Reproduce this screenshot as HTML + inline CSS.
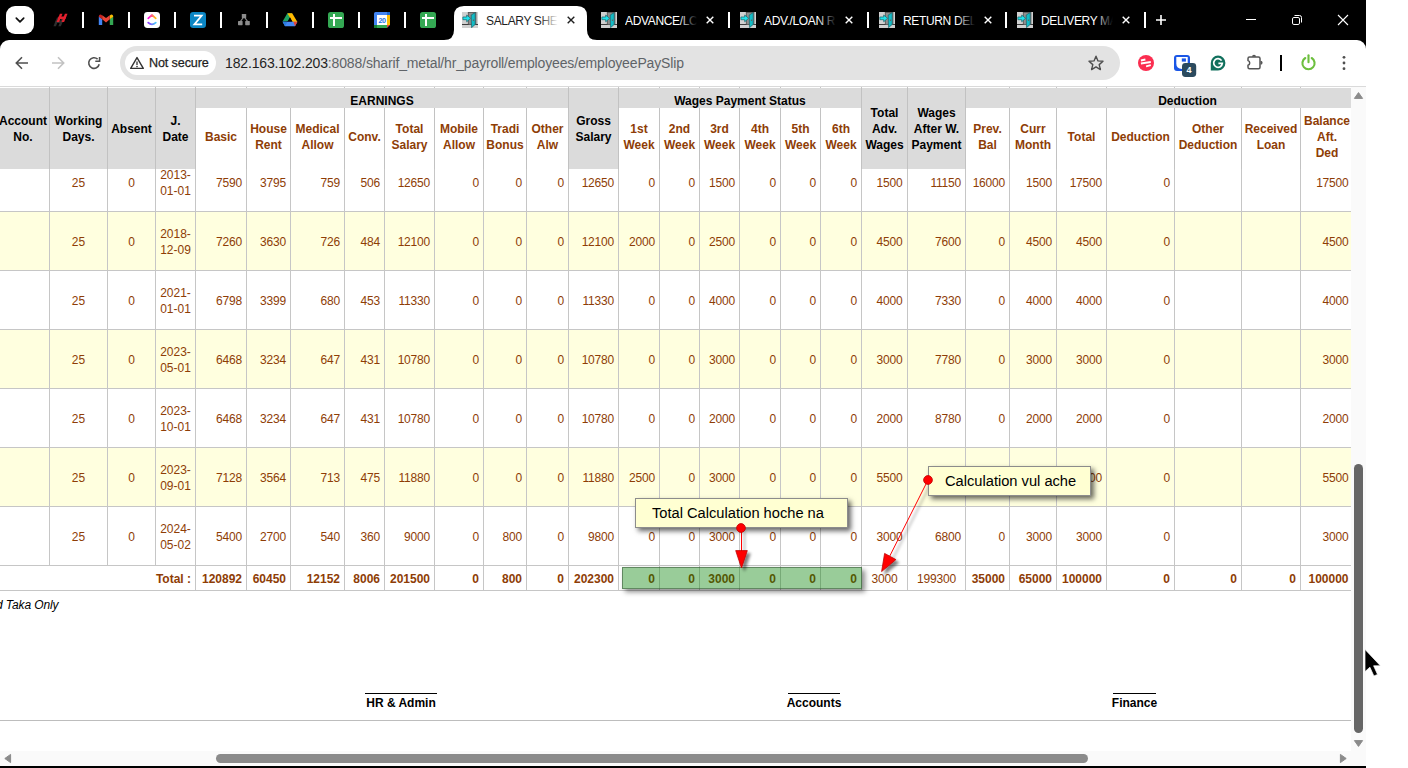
<!DOCTYPE html>
<html lang="en"><head><meta charset="utf-8"><title>SALARY SHEET</title>
<style>
html,body{margin:0;padding:0;}
body{width:1408px;height:768px;position:relative;overflow:hidden;background:#fff;font-family:"Liberation Sans",sans-serif;font-size:12px;}
#win{position:absolute;left:0;top:0;width:1366px;height:768px;overflow:hidden;background:#fff;}
.abs,.abs *{position:absolute;}
#win div,#win span,#win svg{position:absolute;}
.sep{width:2px;height:16px;top:12px;background:#fff;}
.tt{top:13px;height:16px;line-height:16px;font-size:12px;white-space:nowrap;overflow:hidden;letter-spacing:-0.35px;}
.c{color:#8e3d06;font-size:12px;line-height:16px;white-space:nowrap;}
.r{text-align:right;letter-spacing:-0.2px;}
.m{text-align:center;}
.b{font-weight:bold;letter-spacing:0;}
.h{font-weight:bold;text-align:center;line-height:16px;font-size:12px;}
.vl{width:1px;background:#c6c6c6;}
.hl{height:1px;background:#c6c6c6;left:0;width:1351px;}
.note{background:#ffffd2;border:1px solid #8c8c8c;box-shadow:3px 3px 5px rgba(0,0,0,.6);box-sizing:border-box;color:#000;font-size:14.67px;white-space:nowrap;}
</style></head><body>
<div id="win">

<div id="tabstrip" style="left:0;top:0;width:1366px;height:52px;background:#000;"></div>
<div style="left:6px;top:6px;width:28px;height:28px;border-radius:9px;background:#fff;"></div>
<svg style="left:14px;top:14px" width="12" height="12" viewBox="0 0 12 12"><path d="M2.3 4.2 L6 7.9 L9.7 4.2" fill="none" stroke="#111" stroke-width="1.7" stroke-linecap="round" stroke-linejoin="round"/></svg>
<div class="sep" style="left:82px"></div>
<div class="sep" style="left:128px"></div>
<div class="sep" style="left:174px"></div>
<div class="sep" style="left:220px"></div>
<div class="sep" style="left:266px"></div>
<div class="sep" style="left:312px"></div>
<div class="sep" style="left:358px"></div>
<div class="sep" style="left:404px"></div>
<svg style="left:52px;top:12px" width="16" height="16" viewBox="0 0 16 16">
<g transform="translate(5.0,5.4) skewX(-22)" fill="#2e2e2e"><rect x="0" y="0" width="2.5" height="8.8"/><rect x="4.9" y="0" width="2.5" height="8.8"/><rect x="0" y="3.2" width="7.4" height="2.4"/></g>
<g transform="translate(7.9,1.7) skewX(-22)" fill="#e2202e"><rect x="0" y="0" width="2.6" height="8.4"/><rect x="5" y="0" width="2.6" height="8.4"/><rect x="0" y="2.9" width="7.6" height="2.5"/></g>
</svg>
<svg style="left:98px;top:12px" width="16" height="16" viewBox="0 0 16 16">
<path d="M0.8 4.6 L0.8 12.9 L4.2 12.9 L4.2 7 Z" fill="#4285f4"/>
<path d="M15.2 4.6 L15.2 12.9 L11.8 12.9 L11.8 7 Z" fill="#34a853"/>
<path d="M0.8 4.4 Q0.8 2.4 2.8 2.5 L4.2 3.6 L4.2 7.2 L0.8 4.8 Z" fill="#c5221f"/>
<path d="M15.2 4.4 Q15.2 2.4 13.2 2.5 L11.8 3.6 L11.8 7.2 L15.2 4.8 Z" fill="#fbbc04"/>
<path d="M4.2 3.2 L8 6 L11.8 3.2 L11.8 7.3 L8 10.4 L4.2 7.3 Z" fill="#ea4335"/>
</svg>
<svg style="left:144px;top:12px" width="16" height="16" viewBox="0 0 16 16">
<defs><linearGradient id="cu1" x1="0" x2="1" y1="0" y2="0"><stop offset="0" stop-color="#ff02f0"/><stop offset="1" stop-color="#ffc800"/></linearGradient>
<linearGradient id="cu2" x1="0" x2="1" y1="0" y2="0"><stop offset="0" stop-color="#8930fd"/><stop offset="1" stop-color="#49ccf9"/></linearGradient></defs>
<rect width="16" height="16" rx="3.4" fill="#fff"/>
<path d="M4.2 6.3 L8 3 L11.8 6.3" fill="none" stroke="url(#cu1)" stroke-width="1.7" stroke-linecap="round" stroke-linejoin="round"/>
<path d="M4.2 10.7 Q8 14.2 11.8 10.7" fill="none" stroke="url(#cu2)" stroke-width="1.7" stroke-linecap="round"/>
</svg>
<svg style="left:190px;top:12px" width="16" height="16" viewBox="0 0 16 16">
<rect width="16" height="16" rx="3.2" fill="#0b86c4"/>
<path d="M4 3.7 L11.6 3.7 L4.4 12.4 L12.2 12.4" fill="none" stroke="#fff" stroke-width="1.8" stroke-linejoin="miter"/>
</svg>
<svg style="left:236px;top:12px" width="16" height="16" viewBox="0 0 16 16">
<g fill="#8c8c8c"><rect x="5.8" y="2" width="4.4" height="4.2" rx=".6"/><rect x="2" y="9" width="4.6" height="4.2" rx=".6"/><rect x="9.2" y="9" width="4.6" height="4.2" rx=".6"/></g>
<path d="M7 6 L4.6 9.2 M9 6 L11.4 9.2" stroke="#8c8c8c" stroke-width="1.1" fill="none"/>
</svg>
<svg style="left:282px;top:12px" width="16" height="16" viewBox="0 0 16 16">
<path d="M5.4 1.2 L10.2 1.2 L6.2 9 L0.6 9.6 Z" fill="#1ea362"/>
<path d="M5.4 1.2 L10.2 1.2 L15.4 10 L10.4 10 Z" fill="#ffba00"/>
<path d="M8 5.3 L10.6 10 L5.3 10 Z" fill="#000"/>
<path d="M0.6 9.8 L13.2 9.8 L15.4 10 L13 14.3 L3 14.3 Z" fill="#4688f4"/>
<path d="M11.4 9.8 L15.4 9.8 L13 14.3 Z" fill="#e94335"/>
<path d="M0.6 9.8 L3 14.3 L5.4 9.8 Z" fill="#2a7de1"/>
</svg>
<svg style="left:328px;top:12px" width="16" height="16" viewBox="0 0 16 16">
<rect width="16" height="16" rx="2.6" fill="#34a853"/><rect x="5" y="2" width="2" height="12" fill="#fff"/><rect x="2" y="5" width="12" height="2" fill="#fff"/></svg>
<svg style="left:374px;top:12px" width="16" height="16" viewBox="0 0 16 16">
<rect x="0" y="0" width="16" height="16" rx="1.6" fill="#4285f4"/>
<rect x="13" y="0" width="3" height="3" fill="#1967d2"/>
<rect x="13" y="3" width="3" height="10" fill="#fbbc04"/>
<rect x="0" y="13" width="13" height="3" fill="#34a853"/>
<rect x="0" y="13" width="3" height="3" fill="#188038"/>
<path d="M13 13 L16 13 L13 16 Z" fill="#ea4335"/><path d="M16 13 L16 16 L13 16 Z" fill="#000"/>
<rect x="3" y="3" width="10" height="10" fill="#fff"/>
<text x="8" y="10.9" font-family="Liberation Sans, sans-serif" font-size="7.2" font-weight="bold" fill="#1a73e8" text-anchor="middle" letter-spacing="-0.4">20</text>
</svg>
<svg style="left:420px;top:12px" width="16" height="16" viewBox="0 0 16 16">
<rect width="16" height="16" rx="2.6" fill="#34a853"/><rect x="5" y="2" width="2" height="12" fill="#fff"/><rect x="2" y="5" width="12" height="2" fill="#fff"/></svg>
<svg style="left:444px;top:6px" width="153" height="34" viewBox="0 0 153 34">
<path d="M0 34 Q10 34 10 24 L10 10 Q10 0 20 0 L133 0 Q143 0 143 10 L143 24 Q143 34 153 34 Z" fill="#fff"/></svg>
<svg style="left:462px;top:12px" width="16" height="16" viewBox="0 0 16 16">
<rect width="16" height="16" fill="#d0d0d0"/>
<rect x="6.3" y="0.4" width="7.6" height="12" fill="#8f8f8f" stroke="#555" stroke-width=".9"/>
<path d="M0 12.5 L6.6 12.5 M13.4 12.5 L16 12.5" stroke="#3c3c3c" stroke-width="1"/>
<path d="M9.2 3 L13.2 0.6 L13.2 12.4 L9.5 15.7 Z" fill="#12bcc6" stroke="#245f64" stroke-width=".7"/>
<circle cx="11.5" cy="8.2" r=".65" fill="#7a4a4a"/>
<path d="M0.9 5 L4.7 5 L4.7 3 L8.6 6.3 L4.7 9.8 L4.7 7.7 L0.9 7.7 Z" fill="#1fe3ec" stroke="#1f6f76" stroke-width=".8" stroke-linejoin="round"/>
</svg>
<div class="tt" style="left:486px;width:72px;color:#1f1f1f">SALARY SHE<span style="right:0;top:0;width:18px;height:16px;background:linear-gradient(to right,rgba(255,255,255,0),rgba(255,255,255,1))"></span></div>
<svg style="left:566px;top:15px" width="10" height="10" viewBox="0 0 10 10"><path d="M1.7 1.7 L8.3 8.3 M8.3 1.7 L1.7 8.3" stroke="#1f1f1f" stroke-width="1.4" fill="none"/></svg>
<svg style="left:601px;top:12px" width="16" height="16" viewBox="0 0 16 16">
<rect width="16" height="16" fill="#d0d0d0"/>
<rect x="6.3" y="0.4" width="7.6" height="12" fill="#8f8f8f" stroke="#555" stroke-width=".9"/>
<path d="M0 12.5 L6.6 12.5 M13.4 12.5 L16 12.5" stroke="#3c3c3c" stroke-width="1"/>
<path d="M9.2 3 L13.2 0.6 L13.2 12.4 L9.5 15.7 Z" fill="#12bcc6" stroke="#245f64" stroke-width=".7"/>
<circle cx="11.5" cy="8.2" r=".65" fill="#7a4a4a"/>
<path d="M0.9 5 L4.7 5 L4.7 3 L8.6 6.3 L4.7 9.8 L4.7 7.7 L0.9 7.7 Z" fill="#1fe3ec" stroke="#1f6f76" stroke-width=".8" stroke-linejoin="round"/>
</svg>
<div class="tt" style="left:625px;width:72px;color:#fff">ADVANCE/LC<span style="right:0;top:0;width:18px;height:16px;background:linear-gradient(to right,rgba(0,0,0,0),rgba(0,0,0,1))"></span></div>
<svg style="left:705px;top:15px" width="10" height="10" viewBox="0 0 10 10"><path d="M1.7 1.7 L8.3 8.3 M8.3 1.7 L1.7 8.3" stroke="#fff" stroke-width="1.4" fill="none"/></svg>
<svg style="left:740px;top:12px" width="16" height="16" viewBox="0 0 16 16">
<rect width="16" height="16" fill="#d0d0d0"/>
<rect x="6.3" y="0.4" width="7.6" height="12" fill="#8f8f8f" stroke="#555" stroke-width=".9"/>
<path d="M0 12.5 L6.6 12.5 M13.4 12.5 L16 12.5" stroke="#3c3c3c" stroke-width="1"/>
<path d="M9.2 3 L13.2 0.6 L13.2 12.4 L9.5 15.7 Z" fill="#12bcc6" stroke="#245f64" stroke-width=".7"/>
<circle cx="11.5" cy="8.2" r=".65" fill="#7a4a4a"/>
<path d="M0.9 5 L4.7 5 L4.7 3 L8.6 6.3 L4.7 9.8 L4.7 7.7 L0.9 7.7 Z" fill="#1fe3ec" stroke="#1f6f76" stroke-width=".8" stroke-linejoin="round"/>
</svg>
<div class="tt" style="left:764px;width:72px;color:#fff">ADV./LOAN R<span style="right:0;top:0;width:18px;height:16px;background:linear-gradient(to right,rgba(0,0,0,0),rgba(0,0,0,1))"></span></div>
<svg style="left:844px;top:15px" width="10" height="10" viewBox="0 0 10 10"><path d="M1.7 1.7 L8.3 8.3 M8.3 1.7 L1.7 8.3" stroke="#fff" stroke-width="1.4" fill="none"/></svg>
<svg style="left:879px;top:12px" width="16" height="16" viewBox="0 0 16 16">
<rect width="16" height="16" fill="#d0d0d0"/>
<rect x="6.3" y="0.4" width="7.6" height="12" fill="#8f8f8f" stroke="#555" stroke-width=".9"/>
<path d="M0 12.5 L6.6 12.5 M13.4 12.5 L16 12.5" stroke="#3c3c3c" stroke-width="1"/>
<path d="M9.2 3 L13.2 0.6 L13.2 12.4 L9.5 15.7 Z" fill="#12bcc6" stroke="#245f64" stroke-width=".7"/>
<circle cx="11.5" cy="8.2" r=".65" fill="#7a4a4a"/>
<path d="M0.9 5 L4.7 5 L4.7 3 L8.6 6.3 L4.7 9.8 L4.7 7.7 L0.9 7.7 Z" fill="#1fe3ec" stroke="#1f6f76" stroke-width=".8" stroke-linejoin="round"/>
</svg>
<div class="tt" style="left:903px;width:72px;color:#fff">RETURN DEL<span style="right:0;top:0;width:18px;height:16px;background:linear-gradient(to right,rgba(0,0,0,0),rgba(0,0,0,1))"></span></div>
<svg style="left:983px;top:15px" width="10" height="10" viewBox="0 0 10 10"><path d="M1.7 1.7 L8.3 8.3 M8.3 1.7 L1.7 8.3" stroke="#fff" stroke-width="1.4" fill="none"/></svg>
<svg style="left:1017px;top:12px" width="16" height="16" viewBox="0 0 16 16">
<rect width="16" height="16" fill="#d0d0d0"/>
<rect x="6.3" y="0.4" width="7.6" height="12" fill="#8f8f8f" stroke="#555" stroke-width=".9"/>
<path d="M0 12.5 L6.6 12.5 M13.4 12.5 L16 12.5" stroke="#3c3c3c" stroke-width="1"/>
<path d="M9.2 3 L13.2 0.6 L13.2 12.4 L9.5 15.7 Z" fill="#12bcc6" stroke="#245f64" stroke-width=".7"/>
<circle cx="11.5" cy="8.2" r=".65" fill="#7a4a4a"/>
<path d="M0.9 5 L4.7 5 L4.7 3 L8.6 6.3 L4.7 9.8 L4.7 7.7 L0.9 7.7 Z" fill="#1fe3ec" stroke="#1f6f76" stroke-width=".8" stroke-linejoin="round"/>
</svg>
<div class="tt" style="left:1041px;width:72px;color:#fff">DELIVERY MA<span style="right:0;top:0;width:18px;height:16px;background:linear-gradient(to right,rgba(0,0,0,0),rgba(0,0,0,1))"></span></div>
<svg style="left:1121px;top:15px" width="10" height="10" viewBox="0 0 10 10"><path d="M1.7 1.7 L8.3 8.3 M8.3 1.7 L1.7 8.3" stroke="#fff" stroke-width="1.4" fill="none"/></svg>
<div class="sep" style="left:728px"></div>
<div class="sep" style="left:867px"></div>
<div class="sep" style="left:1005px"></div>
<div class="sep" style="left:1144px"></div>
<svg style="left:1155px;top:14px" width="12" height="12" viewBox="0 0 12 12"><path d="M6 1 L6 11 M1 6 L11 6" stroke="#fff" stroke-width="1.6" fill="none"/></svg>
<svg style="left:1240px;top:10px" width="120" height="20" viewBox="0 0 120 20"><path d="M6 9.5 L16 9.5" stroke="#fff" stroke-width="1"/><rect x="52.5" y="7.5" width="7" height="7" rx="1.4" fill="none" stroke="#fff" stroke-width="1"/><path d="M54.5 5.5 L59.5 5.5 Q61.5 5.5 61.5 7.5 L61.5 12.5" fill="none" stroke="#fff" stroke-width="1"/><path d="M98 5 L108 15 M108 5 L98 15" stroke="#fff" stroke-width="1.1"/></svg>
<div style="left:0;top:40px;width:1366px;height:46px;background:#fff;border-radius:9px 9px 0 0;"></div>
<div style="left:0;top:86px;width:1366px;height:1px;background:#dadada;"></div>
<svg style="left:14px;top:55px" width="16" height="16" viewBox="0 0 16 16"><path d="M14 8 L2.6 8 M8 2.3 L2.3 8 L8 13.7" fill="none" stroke="#4f4f4f" stroke-width="1.6"/></svg>
<svg style="left:50px;top:55px" width="16" height="16" viewBox="0 0 16 16"><path d="M2 8 L13.4 8 M8 2.3 L13.7 8 L8 13.7" fill="none" stroke="#c2c2c2" stroke-width="1.6"/></svg>
<svg style="left:86px;top:55px" width="16" height="16" viewBox="0 0 16 16"><path d="M13.2 9.2 A5.3 5.3 0 1 1 11.6 4.1" fill="none" stroke="#4f4f4f" stroke-width="1.6"/><path d="M13.6 2 L13.6 6.3 L9.3 6.3" fill="none" stroke="#4f4f4f" stroke-width="1.6"/></svg>
<div style="left:120px;top:46px;width:1000px;height:34px;border-radius:17px;background:#e3e3e3;"></div>
<div style="left:125px;top:51px;width:91px;height:24px;border-radius:12px;background:#fff;"></div>
<svg style="left:129px;top:55px" width="16" height="16" viewBox="0 0 16 16"><path d="M8 2.6 L14.3 13.4 L1.7 13.4 Z" fill="none" stroke="#333" stroke-width="1.4" stroke-linejoin="round"/><path d="M8 6.6 L8 10" stroke="#333" stroke-width="1.3"/><circle cx="8" cy="11.6" r=".8" fill="#333"/></svg>
<div style="left:149px;top:54px;height:18px;line-height:18px;font-size:12.6px;color:#1f1f1f;white-space:nowrap;letter-spacing:-0.12px;-webkit-text-stroke:0.25px #1f1f1f">Not secure</div>
<div style="left:225px;top:54px;height:18px;line-height:18px;font-size:14px;color:#1f1f1f;white-space:nowrap;letter-spacing:-0.15px">182.163.102.203<span style="position:static;color:#5f6368">:8088/sharif_metal/hr_payroll/employees/employeePaySlip</span></div>
<svg style="left:1087px;top:54px" width="18" height="18" viewBox="0 0 18 18"><path d="M9 2.2 L11 6.9 L16 7.3 L12.2 10.6 L13.4 15.6 L9 12.9 L4.6 15.6 L5.8 10.6 L2 7.3 L7 6.9 Z" fill="none" stroke="#4f4f4f" stroke-width="1.4" stroke-linejoin="round"/></svg>
<svg style="left:1138px;top:55px" width="16" height="16" viewBox="0 0 16 16"><circle cx="8" cy="8" r="8" fill="#fb2d50"/><path d="M2.9 5.5 L7.4 4.5 M2.9 8.5 L12.8 7 M8.1 11.3 L12.8 10.1" stroke="#fff" stroke-width="1.8" stroke-linecap="butt"/></svg>
<svg style="left:1174px;top:55px" width="24" height="23" viewBox="0 0 24 23"><rect x="0" y="0" width="16" height="16" rx="3" fill="#1a56e6"/><path d="M2.3 2 L13.7 2 L13.7 9 Q13.7 14 8 14 Q2.3 14 2.3 8.6 Z" fill="#fff"/><rect x="7.8" y="3.4" width="4.1" height="3.2" fill="#1a56e6"/><rect x="8" y="8.1" width="14.2" height="13.8" rx="3.4" fill="#2b4a5e"/><text x="15" y="18.3" font-family="Liberation Sans, sans-serif" font-weight="bold" font-size="9" fill="#fff" text-anchor="middle">4</text></svg>
<svg style="left:1210px;top:55px" width="16" height="16" viewBox="0 0 16 16"><path d="M8 .6 A7.4 7.4 0 1 1 8 15.4 L.8 15.4 L.8 8 A7.4 7.4 0 0 1 8 .6 Z" fill="#11705d"/><path d="M11.6 5.6 A4.3 4.3 0 1 0 12.3 8.4 L8.4 8.4" fill="none" stroke="#fff" stroke-width="1.7"/></svg>
<svg style="left:1246px;top:54px" width="18" height="18" viewBox="0 0 18 18"><path d="M3.5 3.1 L12.5 3.1 Q14 3.1 14 4.6 L14 13.3 Q14 14.8 12.5 14.8 L3.5 14.8 Q2 14.8 2 13.3 L2 11.2 A2.4 2.4 0 0 0 2 6.6 L2 4.6 Q2 3.1 3.5 3.1 Z" fill="none" stroke="#555" stroke-width="1.5" stroke-linejoin="round"/><path d="M6 2.8 A2 2.1 0 0 1 10 2.8 Z" fill="#555"/><path d="M14.5 6.8 A2.1 2 0 0 1 14.5 10.8 Z" fill="#555"/></svg>
<div style="left:1280px;top:55px;width:2px;height:16px;background:#000"></div>
<svg style="left:1300px;top:54px" width="17" height="17" viewBox="0 0 17 17"><path d="M5.3 4 A6.1 6.1 0 1 0 11.7 4" fill="none" stroke="#6dbf3e" stroke-width="2.1" stroke-linecap="round"/><path d="M8.5 1.3 L8.5 8.3" stroke="#6dbf3e" stroke-width="2.1" stroke-linecap="round"/></svg>
<svg style="left:1340px;top:54px" width="8" height="18" viewBox="0 0 8 18"><circle cx="4" cy="3.3" r="1.4" fill="#4f4f4f"/><circle cx="4" cy="9" r="1.4" fill="#4f4f4f"/><circle cx="4" cy="14.7" r="1.4" fill="#4f4f4f"/></svg>
<div id="page" style="left:0;top:87px;width:1351px;height:664px;overflow:hidden;background:#fff">
<div style="left:0;top:125px;width:1351px;height:58px;background:#ffffdf"></div>
<div style="left:0;top:243px;width:1351px;height:58px;background:#ffffdf"></div>
<div style="left:0;top:361px;width:1351px;height:58px;background:#ffffdf"></div>
<div class="hl" style="top:124px"></div>
<div class="hl" style="top:183px"></div>
<div class="hl" style="top:242px"></div>
<div class="hl" style="top:301px"></div>
<div class="hl" style="top:360px"></div>
<div class="hl" style="top:419px"></div>
<div class="hl" style="top:478px"></div>
<div class="hl" style="top:503px"></div>
<div class="vl" style="left:49px;top:0;height:478px"></div>
<div class="vl" style="left:107px;top:0;height:478px"></div>
<div class="vl" style="left:155px;top:0;height:478px"></div>
<div class="vl" style="left:195px;top:0;height:503px"></div>
<div class="vl" style="left:246px;top:0;height:503px"></div>
<div class="vl" style="left:290px;top:0;height:503px"></div>
<div class="vl" style="left:344px;top:0;height:503px"></div>
<div class="vl" style="left:384px;top:0;height:503px"></div>
<div class="vl" style="left:434px;top:0;height:503px"></div>
<div class="vl" style="left:483px;top:0;height:503px"></div>
<div class="vl" style="left:526px;top:0;height:503px"></div>
<div class="vl" style="left:568px;top:0;height:503px"></div>
<div class="vl" style="left:618px;top:0;height:503px"></div>
<div class="vl" style="left:659px;top:0;height:503px"></div>
<div class="vl" style="left:699px;top:0;height:503px"></div>
<div class="vl" style="left:739px;top:0;height:503px"></div>
<div class="vl" style="left:780px;top:0;height:503px"></div>
<div class="vl" style="left:820px;top:0;height:503px"></div>
<div class="vl" style="left:861px;top:0;height:503px"></div>
<div class="vl" style="left:907px;top:0;height:503px"></div>
<div class="vl" style="left:965px;top:0;height:503px"></div>
<div class="vl" style="left:1009px;top:0;height:503px"></div>
<div class="vl" style="left:1056px;top:0;height:503px"></div>
<div class="vl" style="left:1106px;top:0;height:503px"></div>
<div class="vl" style="left:1174px;top:0;height:503px"></div>
<div class="vl" style="left:1241px;top:0;height:503px"></div>
<div class="vl" style="left:1300px;top:0;height:503px"></div>
<div class="c m" style="left:49px;width:59px;top:87.5px">25</div>
<div class="c m" style="left:107px;width:49px;top:87.5px">0</div>
<div class="c m" style="left:155px;width:41px;top:79.5px">2013-<br>01-01</div>
<div class="c r" style="right:1109.0px;top:87.5px">7590</div>
<div class="c r" style="right:1065.0px;top:87.5px">3795</div>
<div class="c r" style="right:1011.0px;top:87.5px">759</div>
<div class="c r" style="right:971.0px;top:87.5px">506</div>
<div class="c r" style="right:921.0px;top:87.5px">12650</div>
<div class="c r" style="right:872.0px;top:87.5px">0</div>
<div class="c r" style="right:829.0px;top:87.5px">0</div>
<div class="c r" style="right:787.0px;top:87.5px">0</div>
<div class="c r" style="right:737.0px;top:87.5px">12650</div>
<div class="c r" style="right:696.0px;top:87.5px">0</div>
<div class="c r" style="right:656.0px;top:87.5px">0</div>
<div class="c r" style="right:616.0px;top:87.5px">1500</div>
<div class="c r" style="right:575.0px;top:87.5px">0</div>
<div class="c r" style="right:535.0px;top:87.5px">0</div>
<div class="c r" style="right:494.0px;top:87.5px">0</div>
<div class="c r" style="right:448.5px;top:87.5px">1500</div>
<div class="c r" style="right:390.0px;top:87.5px">11150</div>
<div class="c r" style="right:346.0px;top:87.5px">16000</div>
<div class="c r" style="right:299.0px;top:87.5px">1500</div>
<div class="c r" style="right:249.0px;top:87.5px">17500</div>
<div class="c r" style="right:181.0px;top:87.5px">0</div>
<div class="c r" style="right:2.5px;top:87.5px">17500</div>
<div class="c m" style="left:49px;width:59px;top:146.5px">25</div>
<div class="c m" style="left:107px;width:49px;top:146.5px">0</div>
<div class="c m" style="left:155px;width:41px;top:138.5px">2018-<br>12-09</div>
<div class="c r" style="right:1109.0px;top:146.5px">7260</div>
<div class="c r" style="right:1065.0px;top:146.5px">3630</div>
<div class="c r" style="right:1011.0px;top:146.5px">726</div>
<div class="c r" style="right:971.0px;top:146.5px">484</div>
<div class="c r" style="right:921.0px;top:146.5px">12100</div>
<div class="c r" style="right:872.0px;top:146.5px">0</div>
<div class="c r" style="right:829.0px;top:146.5px">0</div>
<div class="c r" style="right:787.0px;top:146.5px">0</div>
<div class="c r" style="right:737.0px;top:146.5px">12100</div>
<div class="c r" style="right:696.0px;top:146.5px">2000</div>
<div class="c r" style="right:656.0px;top:146.5px">0</div>
<div class="c r" style="right:616.0px;top:146.5px">2500</div>
<div class="c r" style="right:575.0px;top:146.5px">0</div>
<div class="c r" style="right:535.0px;top:146.5px">0</div>
<div class="c r" style="right:494.0px;top:146.5px">0</div>
<div class="c r" style="right:448.5px;top:146.5px">4500</div>
<div class="c r" style="right:390.0px;top:146.5px">7600</div>
<div class="c r" style="right:346.0px;top:146.5px">0</div>
<div class="c r" style="right:299.0px;top:146.5px">4500</div>
<div class="c r" style="right:249.0px;top:146.5px">4500</div>
<div class="c r" style="right:181.0px;top:146.5px">0</div>
<div class="c r" style="right:2.5px;top:146.5px">4500</div>
<div class="c m" style="left:49px;width:59px;top:205.5px">25</div>
<div class="c m" style="left:107px;width:49px;top:205.5px">0</div>
<div class="c m" style="left:155px;width:41px;top:197.5px">2021-<br>01-01</div>
<div class="c r" style="right:1109.0px;top:205.5px">6798</div>
<div class="c r" style="right:1065.0px;top:205.5px">3399</div>
<div class="c r" style="right:1011.0px;top:205.5px">680</div>
<div class="c r" style="right:971.0px;top:205.5px">453</div>
<div class="c r" style="right:921.0px;top:205.5px">11330</div>
<div class="c r" style="right:872.0px;top:205.5px">0</div>
<div class="c r" style="right:829.0px;top:205.5px">0</div>
<div class="c r" style="right:787.0px;top:205.5px">0</div>
<div class="c r" style="right:737.0px;top:205.5px">11330</div>
<div class="c r" style="right:696.0px;top:205.5px">0</div>
<div class="c r" style="right:656.0px;top:205.5px">0</div>
<div class="c r" style="right:616.0px;top:205.5px">4000</div>
<div class="c r" style="right:575.0px;top:205.5px">0</div>
<div class="c r" style="right:535.0px;top:205.5px">0</div>
<div class="c r" style="right:494.0px;top:205.5px">0</div>
<div class="c r" style="right:448.5px;top:205.5px">4000</div>
<div class="c r" style="right:390.0px;top:205.5px">7330</div>
<div class="c r" style="right:346.0px;top:205.5px">0</div>
<div class="c r" style="right:299.0px;top:205.5px">4000</div>
<div class="c r" style="right:249.0px;top:205.5px">4000</div>
<div class="c r" style="right:181.0px;top:205.5px">0</div>
<div class="c r" style="right:2.5px;top:205.5px">4000</div>
<div class="c m" style="left:49px;width:59px;top:264.5px">25</div>
<div class="c m" style="left:107px;width:49px;top:264.5px">0</div>
<div class="c m" style="left:155px;width:41px;top:256.5px">2023-<br>05-01</div>
<div class="c r" style="right:1109.0px;top:264.5px">6468</div>
<div class="c r" style="right:1065.0px;top:264.5px">3234</div>
<div class="c r" style="right:1011.0px;top:264.5px">647</div>
<div class="c r" style="right:971.0px;top:264.5px">431</div>
<div class="c r" style="right:921.0px;top:264.5px">10780</div>
<div class="c r" style="right:872.0px;top:264.5px">0</div>
<div class="c r" style="right:829.0px;top:264.5px">0</div>
<div class="c r" style="right:787.0px;top:264.5px">0</div>
<div class="c r" style="right:737.0px;top:264.5px">10780</div>
<div class="c r" style="right:696.0px;top:264.5px">0</div>
<div class="c r" style="right:656.0px;top:264.5px">0</div>
<div class="c r" style="right:616.0px;top:264.5px">3000</div>
<div class="c r" style="right:575.0px;top:264.5px">0</div>
<div class="c r" style="right:535.0px;top:264.5px">0</div>
<div class="c r" style="right:494.0px;top:264.5px">0</div>
<div class="c r" style="right:448.5px;top:264.5px">3000</div>
<div class="c r" style="right:390.0px;top:264.5px">7780</div>
<div class="c r" style="right:346.0px;top:264.5px">0</div>
<div class="c r" style="right:299.0px;top:264.5px">3000</div>
<div class="c r" style="right:249.0px;top:264.5px">3000</div>
<div class="c r" style="right:181.0px;top:264.5px">0</div>
<div class="c r" style="right:2.5px;top:264.5px">3000</div>
<div class="c m" style="left:49px;width:59px;top:323.5px">25</div>
<div class="c m" style="left:107px;width:49px;top:323.5px">0</div>
<div class="c m" style="left:155px;width:41px;top:315.5px">2023-<br>10-01</div>
<div class="c r" style="right:1109.0px;top:323.5px">6468</div>
<div class="c r" style="right:1065.0px;top:323.5px">3234</div>
<div class="c r" style="right:1011.0px;top:323.5px">647</div>
<div class="c r" style="right:971.0px;top:323.5px">431</div>
<div class="c r" style="right:921.0px;top:323.5px">10780</div>
<div class="c r" style="right:872.0px;top:323.5px">0</div>
<div class="c r" style="right:829.0px;top:323.5px">0</div>
<div class="c r" style="right:787.0px;top:323.5px">0</div>
<div class="c r" style="right:737.0px;top:323.5px">10780</div>
<div class="c r" style="right:696.0px;top:323.5px">0</div>
<div class="c r" style="right:656.0px;top:323.5px">0</div>
<div class="c r" style="right:616.0px;top:323.5px">2000</div>
<div class="c r" style="right:575.0px;top:323.5px">0</div>
<div class="c r" style="right:535.0px;top:323.5px">0</div>
<div class="c r" style="right:494.0px;top:323.5px">0</div>
<div class="c r" style="right:448.5px;top:323.5px">2000</div>
<div class="c r" style="right:390.0px;top:323.5px">8780</div>
<div class="c r" style="right:346.0px;top:323.5px">0</div>
<div class="c r" style="right:299.0px;top:323.5px">2000</div>
<div class="c r" style="right:249.0px;top:323.5px">2000</div>
<div class="c r" style="right:181.0px;top:323.5px">0</div>
<div class="c r" style="right:2.5px;top:323.5px">2000</div>
<div class="c m" style="left:49px;width:59px;top:382.5px">25</div>
<div class="c m" style="left:107px;width:49px;top:382.5px">0</div>
<div class="c m" style="left:155px;width:41px;top:374.5px">2023-<br>09-01</div>
<div class="c r" style="right:1109.0px;top:382.5px">7128</div>
<div class="c r" style="right:1065.0px;top:382.5px">3564</div>
<div class="c r" style="right:1011.0px;top:382.5px">713</div>
<div class="c r" style="right:971.0px;top:382.5px">475</div>
<div class="c r" style="right:921.0px;top:382.5px">11880</div>
<div class="c r" style="right:872.0px;top:382.5px">0</div>
<div class="c r" style="right:829.0px;top:382.5px">0</div>
<div class="c r" style="right:787.0px;top:382.5px">0</div>
<div class="c r" style="right:737.0px;top:382.5px">11880</div>
<div class="c r" style="right:696.0px;top:382.5px">2500</div>
<div class="c r" style="right:656.0px;top:382.5px">0</div>
<div class="c r" style="right:616.0px;top:382.5px">3000</div>
<div class="c r" style="right:575.0px;top:382.5px">0</div>
<div class="c r" style="right:535.0px;top:382.5px">0</div>
<div class="c r" style="right:494.0px;top:382.5px">0</div>
<div class="c r" style="right:448.5px;top:382.5px">5500</div>
<div class="c r" style="right:390.0px;top:382.5px">6380</div>
<div class="c r" style="right:346.0px;top:382.5px">0</div>
<div class="c r" style="right:299.0px;top:382.5px">5500</div>
<div class="c r" style="right:249.0px;top:382.5px">5500</div>
<div class="c r" style="right:181.0px;top:382.5px">0</div>
<div class="c r" style="right:2.5px;top:382.5px">5500</div>
<div class="c m" style="left:49px;width:59px;top:441.5px">25</div>
<div class="c m" style="left:107px;width:49px;top:441.5px">0</div>
<div class="c m" style="left:155px;width:41px;top:433.5px">2024-<br>05-02</div>
<div class="c r" style="right:1109.0px;top:441.5px">5400</div>
<div class="c r" style="right:1065.0px;top:441.5px">2700</div>
<div class="c r" style="right:1011.0px;top:441.5px">540</div>
<div class="c r" style="right:971.0px;top:441.5px">360</div>
<div class="c r" style="right:921.0px;top:441.5px">9000</div>
<div class="c r" style="right:872.0px;top:441.5px">0</div>
<div class="c r" style="right:829.0px;top:441.5px">800</div>
<div class="c r" style="right:787.0px;top:441.5px">0</div>
<div class="c r" style="right:737.0px;top:441.5px">9800</div>
<div class="c r" style="right:696.0px;top:441.5px">0</div>
<div class="c r" style="right:656.0px;top:441.5px">0</div>
<div class="c r" style="right:616.0px;top:441.5px">3000</div>
<div class="c r" style="right:575.0px;top:441.5px">0</div>
<div class="c r" style="right:535.0px;top:441.5px">0</div>
<div class="c r" style="right:494.0px;top:441.5px">0</div>
<div class="c r" style="right:448.5px;top:441.5px">3000</div>
<div class="c r" style="right:390.0px;top:441.5px">6800</div>
<div class="c r" style="right:346.0px;top:441.5px">0</div>
<div class="c r" style="right:299.0px;top:441.5px">3000</div>
<div class="c r" style="right:249.0px;top:441.5px">3000</div>
<div class="c r" style="right:181.0px;top:441.5px">0</div>
<div class="c r" style="right:2.5px;top:441.5px">3000</div>
<div class="c r b" style="right:1160px;top:483.8px">Total :</div>
<div class="c r b" style="right:1109.0px;top:483.8px">120892</div>
<div class="c r b" style="right:1065.0px;top:483.8px">60450</div>
<div class="c r b" style="right:1011.0px;top:483.8px">12152</div>
<div class="c r b" style="right:971.0px;top:483.8px">8006</div>
<div class="c r b" style="right:921.0px;top:483.8px">201500</div>
<div class="c r b" style="right:872.0px;top:483.8px">0</div>
<div class="c r b" style="right:829.0px;top:483.8px">800</div>
<div class="c r b" style="right:787.0px;top:483.8px">0</div>
<div class="c r b" style="right:737.0px;top:483.8px">202300</div>
<div class="c r b" style="right:696.0px;top:483.8px">0</div>
<div class="c r b" style="right:656.0px;top:483.8px">0</div>
<div class="c r b" style="right:616.0px;top:483.8px">3000</div>
<div class="c r b" style="right:575.0px;top:483.8px">0</div>
<div class="c r b" style="right:535.0px;top:483.8px">0</div>
<div class="c r b" style="right:494.0px;top:483.8px">0</div>
<div class="c m" style="left:861px;width:47px;top:483.8px;letter-spacing:-0.2px">3000</div>
<div class="c m" style="left:907px;width:59px;top:483.8px;letter-spacing:-0.2px">199300</div>
<div class="c r b" style="right:346.0px;top:483.8px">35000</div>
<div class="c r b" style="right:299.0px;top:483.8px">65000</div>
<div class="c r b" style="right:249.0px;top:483.8px">100000</div>
<div class="c r b" style="right:181.0px;top:483.8px">0</div>
<div class="c r b" style="right:114.0px;top:483.8px">0</div>
<div class="c r b" style="right:55.0px;top:483.8px">0</div>
<div class="c r b" style="right:2.5px;top:483.8px">100000</div>
<div style="left:0;top:1px;width:1351px;height:81px;background:#fff"></div>
<div style="left:0px;top:1px;width:195px;height:81px;background:#dbdbdb"></div>
<div style="left:195px;top:1px;width:373px;height:20px;background:#dbdbdb"></div>
<div style="left:568px;top:1px;width:50px;height:81px;background:#dbdbdb"></div>
<div style="left:618px;top:1px;width:243px;height:20px;background:#dbdbdb"></div>
<div style="left:861px;top:1px;width:104px;height:81px;background:#dbdbdb"></div>
<div style="left:965px;top:1px;width:386px;height:20px;background:#dbdbdb"></div>
<div class="vl" style="left:49px;top:1px;height:81px;background:#c2c2c2"></div>
<div class="vl" style="left:107px;top:1px;height:81px;background:#c2c2c2"></div>
<div class="vl" style="left:155px;top:1px;height:81px;background:#c2c2c2"></div>
<div class="vl" style="left:195px;top:1px;height:81px;background:#c2c2c2"></div>
<div class="vl" style="left:246px;top:21px;height:61px;background:#c2c2c2"></div>
<div class="vl" style="left:290px;top:21px;height:61px;background:#c2c2c2"></div>
<div class="vl" style="left:344px;top:21px;height:61px;background:#c2c2c2"></div>
<div class="vl" style="left:384px;top:21px;height:61px;background:#c2c2c2"></div>
<div class="vl" style="left:434px;top:21px;height:61px;background:#c2c2c2"></div>
<div class="vl" style="left:483px;top:21px;height:61px;background:#c2c2c2"></div>
<div class="vl" style="left:526px;top:21px;height:61px;background:#c2c2c2"></div>
<div class="vl" style="left:568px;top:1px;height:81px;background:#c2c2c2"></div>
<div class="vl" style="left:618px;top:1px;height:81px;background:#c2c2c2"></div>
<div class="vl" style="left:659px;top:21px;height:61px;background:#c2c2c2"></div>
<div class="vl" style="left:699px;top:21px;height:61px;background:#c2c2c2"></div>
<div class="vl" style="left:739px;top:21px;height:61px;background:#c2c2c2"></div>
<div class="vl" style="left:780px;top:21px;height:61px;background:#c2c2c2"></div>
<div class="vl" style="left:820px;top:21px;height:61px;background:#c2c2c2"></div>
<div class="vl" style="left:861px;top:1px;height:81px;background:#c2c2c2"></div>
<div class="vl" style="left:907px;top:1px;height:81px;background:#c2c2c2"></div>
<div class="vl" style="left:965px;top:1px;height:81px;background:#c2c2c2"></div>
<div class="vl" style="left:1009px;top:21px;height:61px;background:#c2c2c2"></div>
<div class="vl" style="left:1056px;top:21px;height:61px;background:#c2c2c2"></div>
<div class="vl" style="left:1106px;top:21px;height:61px;background:#c2c2c2"></div>
<div class="vl" style="left:1174px;top:21px;height:61px;background:#c2c2c2"></div>
<div class="vl" style="left:1241px;top:21px;height:61px;background:#c2c2c2"></div>
<div class="vl" style="left:1300px;top:21px;height:61px;background:#c2c2c2"></div>
<div class="h" style="left:-2px;width:50px;top:26.0px;color:#000;white-space:nowrap">Account<br>No.</div>
<div class="h" style="left:49px;width:59px;top:26.0px;color:#000;white-space:nowrap">Working<br>Days.</div>
<div class="h" style="left:107px;width:49px;top:34.0px;color:#000;white-space:nowrap">Absent</div>
<div class="h" style="left:155px;width:41px;top:26.0px;color:#000;white-space:nowrap">J.<br>Date</div>
<div class="h" style="left:195px;width:374px;top:5.5px;color:#000;white-space:nowrap">EARNINGS</div>
<div class="h" style="left:568px;width:51px;top:26.0px;color:#000;white-space:nowrap">Gross<br>Salary</div>
<div class="h" style="left:618px;width:244px;top:5.5px;color:#000;white-space:nowrap">Wages Payment Status</div>
<div class="h" style="left:861px;width:47px;top:18.0px;color:#000;white-space:nowrap">Total<br>Adv.<br>Wages</div>
<div class="h" style="left:907px;width:59px;top:18.0px;color:#000;white-space:nowrap">Wages<br>After W.<br>Payment</div>
<div class="h" style="left:1087px;width:201px;top:5.5px;color:#000;white-space:nowrap">Deduction</div>
<div class="h" style="left:195px;width:52px;top:42.0px;color:#8e3d06;white-space:nowrap">Basic</div>
<div class="h" style="left:246px;width:45px;top:34.0px;color:#8e3d06;white-space:nowrap">House<br>Rent</div>
<div class="h" style="left:290px;width:55px;top:34.0px;color:#8e3d06;white-space:nowrap">Medical<br>Allow</div>
<div class="h" style="left:344px;width:41px;top:42.0px;color:#8e3d06;white-space:nowrap">Conv.</div>
<div class="h" style="left:384px;width:51px;top:34.0px;color:#8e3d06;white-space:nowrap">Total<br>Salary</div>
<div class="h" style="left:434px;width:50px;top:34.0px;color:#8e3d06;white-space:nowrap">Mobile<br>Allow</div>
<div class="h" style="left:483px;width:44px;top:34.0px;color:#8e3d06;white-space:nowrap">Tradi<br>Bonus</div>
<div class="h" style="left:526px;width:43px;top:34.0px;color:#8e3d06;white-space:nowrap">Other<br>Alw</div>
<div class="h" style="left:618px;width:42px;top:34.0px;color:#8e3d06;white-space:nowrap">1st<br>Week</div>
<div class="h" style="left:659px;width:41px;top:34.0px;color:#8e3d06;white-space:nowrap">2nd<br>Week</div>
<div class="h" style="left:699px;width:41px;top:34.0px;color:#8e3d06;white-space:nowrap">3rd<br>Week</div>
<div class="h" style="left:739px;width:42px;top:34.0px;color:#8e3d06;white-space:nowrap">4th<br>Week</div>
<div class="h" style="left:780px;width:41px;top:34.0px;color:#8e3d06;white-space:nowrap">5th<br>Week</div>
<div class="h" style="left:820px;width:42px;top:34.0px;color:#8e3d06;white-space:nowrap">6th<br>Week</div>
<div class="h" style="left:965px;width:45px;top:34.0px;color:#8e3d06;white-space:nowrap">Prev.<br>Bal</div>
<div class="h" style="left:1009px;width:48px;top:34.0px;color:#8e3d06;white-space:nowrap">Curr<br>Month</div>
<div class="h" style="left:1056px;width:51px;top:42.0px;color:#8e3d06;white-space:nowrap">Total</div>
<div class="h" style="left:1106px;width:69px;top:42.0px;color:#8e3d06;white-space:nowrap">Deduction</div>
<div class="h" style="left:1174px;width:68px;top:34.0px;color:#8e3d06;white-space:nowrap">Other<br>Deduction</div>
<div class="h" style="left:1241px;width:60px;top:34.0px;color:#8e3d06;white-space:nowrap">Received<br>Loan</div>
<div class="h" style="left:1301px;width:52px;top:26.0px;color:#8e3d06;white-space:nowrap">Balance<br>Aft.<br>Ded</div>
<div style="left:-4px;top:510px;font-style:italic;color:#000;font-size:12px;line-height:16px;white-space:nowrap;letter-spacing:-0.1px">d Taka Only</div>
<div style="left:365px;top:606px;width:72px;height:1px;background:#000"></div>
<div style="left:355px;top:608px;width:92px;text-align:center;font-weight:bold;color:#000;font-size:12px;line-height:16px;white-space:nowrap">HR &amp; Admin</div>
<div style="left:788px;top:606px;width:52px;height:1px;background:#000"></div>
<div style="left:778px;top:608px;width:72px;text-align:center;font-weight:bold;color:#000;font-size:12px;line-height:16px;white-space:nowrap">Accounts</div>
<div style="left:1113px;top:606px;width:43px;height:1px;background:#000"></div>
<div style="left:1103px;top:608px;width:63px;text-align:center;font-weight:bold;color:#000;font-size:12px;line-height:16px;white-space:nowrap">Finance</div>
<div class="hl" style="top:633px;background:#bdbdbd"></div>
<div style="left:622px;top:480px;width:240px;height:22px;box-sizing:border-box;background:rgba(0,128,0,.4);border:1px solid rgba(60,90,60,.6);box-shadow:3px 3px 5px rgba(0,0,0,.45)"></div>
<svg style="left:600px;top:363px" width="520" height="160" viewBox="600 450 520 160">
<defs><filter id="ds" x="-30%" y="-30%" width="180%" height="180%"><feGaussianBlur in="SourceAlpha" stdDeviation="1.6"/><feOffset dx="2.5" dy="2.5"/><feComponentTransfer><feFuncA type="linear" slope=".5"/></feComponentTransfer><feMerge><feMergeNode/><feMergeNode in="SourceGraphic"/></feMerge></filter></defs>
<g filter="url(#ds)" fill="#f00" stroke="#f00">
<path d="M741.5 527 L741.5 552" stroke-width="1" fill="none"/>
<path d="M735.7 550.6 L747.3 550.6 L741.5 568 Z" stroke="#c00000" stroke-width=".8"/>
<path d="M928 480 L889.8 556" stroke-width="1" fill="none"/>
<path d="M884.6 553.4 L895.9 559.6 L881.6 571.6 Z" stroke="#c00000" stroke-width=".8"/>
</g>
</svg>
<div class="note" style="left:635px;top:411.2px;width:213px;height:29.8px;line-height:28.6px;padding-left:16px">Total Calculation hoche na</div>
<div class="note" style="left:928px;top:379.2px;width:163px;height:29.8px;line-height:28.6px;padding-left:16px">Calculation vul ache</div>
<svg style="left:730px;top:429.6px" width="22" height="22" viewBox="0 0 22 22"><circle cx="11" cy="11" r="4.4" fill="#f00" stroke="#c00000" stroke-width=".8"/></svg>
<svg style="left:917px;top:382px" width="22" height="22" viewBox="0 0 22 22"><circle cx="11" cy="11" r="4.4" fill="#f00" stroke="#c00000" stroke-width=".8"/></svg>
</div>
<div style="left:1351px;top:87px;width:15px;height:664px;background:#fafafa"></div>
<div style="left:0;top:751px;width:1366px;height:15px;background:#fafafa"></div>
<div style="left:1354px;top:464px;width:9px;height:269px;border-radius:4.5px;background:#666"></div>
<div style="left:216px;top:754px;width:872px;height:9px;border-radius:4.5px;background:#8b8b8b"></div>
<svg style="left:1351px;top:88px" width="15" height="15" viewBox="0 0 15 15"><path d="M7.5 4.6 L11.6 10.4 L3.4 10.4 Z" fill="#8b8b8b" stroke="#8b8b8b" stroke-width="1" stroke-linejoin="round"/></svg>
<svg style="left:1351px;top:736px" width="15" height="15" viewBox="0 0 15 15"><path d="M7.5 10.4 L11.6 4.6 L3.4 4.6 Z" fill="#8b8b8b" stroke="#8b8b8b" stroke-width="1" stroke-linejoin="round"/></svg>
<svg style="left:0;top:751px" width="15" height="15" viewBox="0 0 15 15"><path d="M4.8 7.5 L10.6 3.4 L10.6 11.6 Z" fill="#8b8b8b" stroke="#8b8b8b" stroke-width="1" stroke-linejoin="round"/></svg>
<svg style="left:1336px;top:751px" width="15" height="15" viewBox="0 0 15 15"><path d="M10.2 7.5 L4.4 3.4 L4.4 11.6 Z" fill="#8b8b8b" stroke="#8b8b8b" stroke-width="1" stroke-linejoin="round"/></svg>
<div style="left:0;top:766px;width:1366px;height:2px;background:#000"></div>
</div>
<svg style="position:absolute;left:1362px;top:646px" width="22" height="34" viewBox="0 0 22 34"><path d="M3 3.4 L3 25.6 L7.9 21.2 L11.9 30 L15.5 28.4 L11.6 19.8 L18.4 19.8 Z" fill="#000" stroke="#fff" stroke-width=".7" stroke-linejoin="miter"/></svg>
</body></html>
